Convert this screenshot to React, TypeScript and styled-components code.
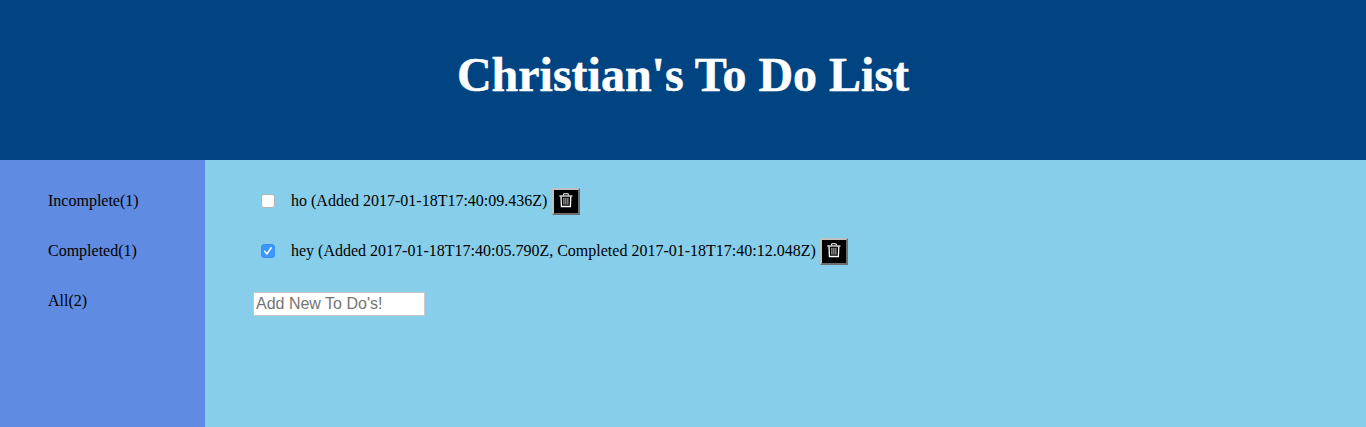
import React, { useState } from 'react';
import styled, { createGlobalStyle } from 'styled-components';

const GlobalStyle = createGlobalStyle`
  html, body { margin: 0; padding: 0; }
  body {
    font-family: "Liberation Serif", "Times New Roman", serif;
    font-size: 16px;
    color: #000;
    overflow: hidden;
  }
`;

const Page = styled.div`
  display: flex;
  flex-direction: column;
  height: 100vh;
`;

const Header = styled.header`
  box-sizing: border-box;
  flex: none;
  height: 160px;
  padding-top: 47px;
  background: #004482;
  color: #fff;
  text-align: center;
`;

const Title = styled.h1`
  margin: 0;
  font-size: 48px;
  line-height: 55px;
  font-weight: bold;
  -webkit-text-stroke: 0.5px #fff;
`;

const Body = styled.div`
  display: flex;
  flex: 1;
`;

const Sidebar = styled.nav`
  box-sizing: border-box;
  width: 205px;
  padding: 16px 0 0 48px;
  background: #5f8be2;
`;

const Main = styled.main`
  flex: 1;
  padding: 16px 0 0 48px;
  background: #87ceeb;
`;

const Filter = styled.div`
  height: 50px;
  line-height: 50px;
`;

const Row = styled.div`
  display: flex;
  align-items: flex-start;
  height: 50px;
`;

const Check = styled.button<{ $on: boolean }>`
  box-sizing: border-box;
  display: block;
  width: 14px;
  height: 14px;
  margin: 18px 16px 0 8px;
  padding: 0;
  border: 1px solid ${p => (p.$on ? '#3a8df5' : '#b4b4b4')};
  border-radius: 3px;
  background: ${p => (p.$on ? '#3b99fc' : '#fff')};

  svg { display: block; }
`;

const Label = styled.span`
  line-height: 50px;
  white-space: nowrap;
`;

const DeleteButton = styled.button`
  box-sizing: border-box;
  display: flex;
  align-items: flex-start;
  justify-content: flex-start;
  width: 28px;
  height: 27px;
  margin: 12px 0 0 4.2px;
  padding: 3px 0 0 5px;
  border: 2px solid;
  border-color: #c0c0c0 #6e6e6e #6e6e6e #c0c0c0;
  background: #000;

  svg { display: block; flex: none; }
`;

const NewItem = styled.input`
  box-sizing: border-box;
  display: block;
  width: 172px;
  height: 24px;
  margin-top: 16px;
  padding: 1px 2px;
  border: 1px solid #c8c8c8;
  border-radius: 0;
  background: #fff;
  font: 16px "Liberation Sans", Arial, sans-serif;

  &::placeholder { color: #757575; opacity: 1; }
`;

const TrashIcon = () => (
  <svg width="14" height="15" viewBox="0 0 14 15" fill="none" stroke="#fff">
    <path d="M0.3 3H13.5" strokeWidth="1.2" />
    <path d="M4.5 2.6V1.5Q4.5 0.7 5.3 0.7H8.5Q9.3 0.7 9.3 1.5V2.6" strokeWidth="1.1" />
    <path d="M2 3.2L2.4 13.5H11.4L11.8 3.2" strokeWidth="1.3" />
    <path d="M4.9 4.8V11.7M6.9 4.8V11.7M8.9 4.8V11.7" strokeWidth="0.8" />
  </svg>
);

const CheckMark = () => (
  <svg width="12" height="12" viewBox="0 0 12 12" fill="none" stroke="#fff" strokeWidth="1.5" strokeLinecap="round" strokeLinejoin="round">
    <path d="M2.8 6.4L5 8.9L9.2 2.8" />
  </svg>
);

interface Item { text: string; added: string; completed?: string }

const initialItems: Item[] = [
  { text: 'ho', added: '2017-01-18T17:40:09.436Z' },
  { text: 'hey', added: '2017-01-18T17:40:05.790Z', completed: '2017-01-18T17:40:12.048Z' },
];

export default function App() {
  const [items, setItems] = useState(initialItems);
  const done = items.filter(i => i.completed).length;

  const toggle = (item: Item) =>
    setItems(items.map(i =>
      i === item ? { ...i, completed: i.completed ? undefined : new Date().toISOString() } : i));

  return (
    <Page>
      <GlobalStyle />
      <Header><Title>Christian's To Do List</Title></Header>
      <Body>
        <Sidebar>
          <Filter>{`Incomplete(${items.length - done})`}</Filter>
          <Filter>{`Completed(${done})`}</Filter>
          <Filter>{`All(${items.length})`}</Filter>
        </Sidebar>
        <Main>
          {items.map(item => (
            <Row key={item.added}>
              <Check $on={!!item.completed} role="checkbox" aria-checked={!!item.completed} onClick={() => toggle(item)}>
                {item.completed && <CheckMark />}
              </Check>
              <Label>
                {`${item.text} (Added ${item.added}${item.completed ? `, Completed ${item.completed}` : ''})`}
              </Label>
              <DeleteButton aria-label="Delete" onClick={() => setItems(items.filter(i => i !== item))}>
                <TrashIcon />
              </DeleteButton>
            </Row>
          ))}
          <NewItem placeholder="Add New To Do's!" />
        </Main>
      </Body>
    </Page>
  );
}
